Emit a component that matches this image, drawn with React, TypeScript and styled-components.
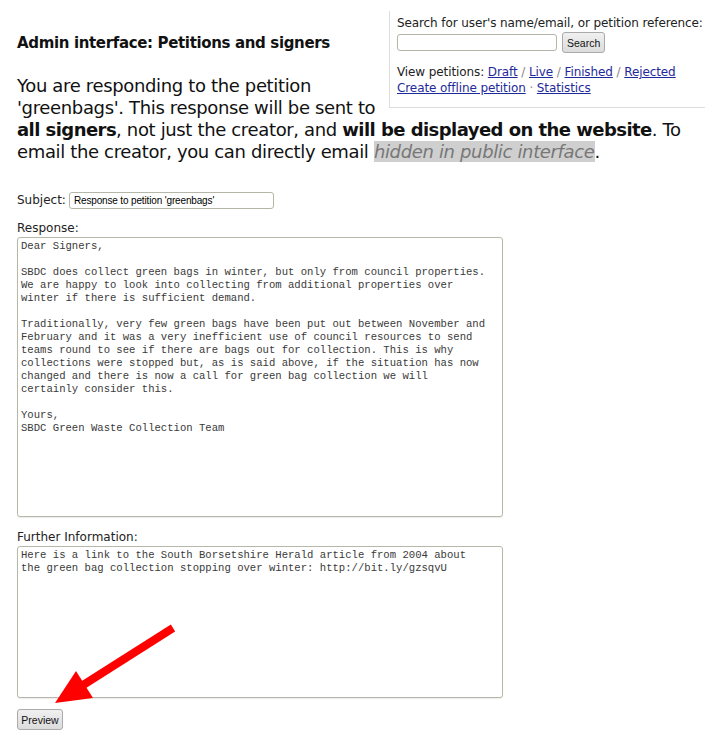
import React from "react";
import styled, { createGlobalStyle } from "styled-components";

const Global = createGlobalStyle`
  html, body { margin: 0; padding: 0; background: #fff; overflow-x: hidden; }
  body { font-family: "DejaVu Sans", Verdana, sans-serif; color: #111; }
`;

const Page = styled.div`
  position: relative;
  padding: 0 0 0 17px;
  width: 688px;
  min-height: 742px;
`;

const SearchBox = styled.div`
  float: right;
  width: 308px;
  margin-top: 11px;
  margin-left: 8px;
  padding: 4px 0 11px 7px;
  border-left: 1px solid #ddd;
  border-bottom: 1px solid #ddd;
  font-size: 12px;
  line-height: 16px;
  letter-spacing: -0.1px;
  white-space: nowrap;
  overflow: hidden;
  color: #222;
`;

const SearchRow = styled.div`
  display: flex;
  align-items: center;
  gap: 5px;
  margin: 1px 0 11px;
`;

const TextInput = styled.input<{ $w: number }>`
  width: ${(p) => p.$w}px;
  height: 17px;
  box-sizing: border-box;
  border: 1px solid #b5b5a8;
  border-radius: 3px;
  padding: 0 4px;
  font-family: "Liberation Sans", Arial, sans-serif;
  font-size: 10px;
  letter-spacing: -0.15px;
  color: #000;
  background: #fff;
`;

const Button = styled.button`
  height: 21px;
  padding: 0 4px;
  border: 1px solid #aaa;
  border-radius: 3px;
  background: linear-gradient(#f0f0f0, #dcdcdc);
  font-family: "Liberation Sans", Arial, sans-serif;
  font-size: 10.5px;
  color: #111;
`;

const Link = styled.a`
  color: #1f2a9a;
  text-decoration: underline;
`;

const Sep = styled.span`
  color: #888;
`;

const Heading = styled.h2`
  margin: 0;
  padding-top: 34px;
  font-size: 15px;
  line-height: 18px;
  font-weight: bold;
  letter-spacing: -0.35px;
  color: #111;
`;

const Intro = styled.p`
  margin: 23px 0 0;
  font-size: 18px;
  line-height: 22px;
  color: #111;
  letter-spacing: -0.35px;
`;

const Strong = styled.b`
  letter-spacing: -0.55px;
`;

const Hidden = styled.span`
  background: #cfcfcf;
  color: #777;
  font-style: italic;
`;

const Form = styled.form`
  clear: both;
  padding-top: 29px;
  font-size: 12px;
  line-height: 15px;
  color: #222;
`;

const FieldRow = styled.div`
  display: flex;
  align-items: center;
  gap: 3px;
  height: 16px;
`;

const Label = styled.label<{ $top: number }>`
  display: block;
  margin-top: ${(p) => p.$top}px;
  margin-bottom: 1px;
`;

const Area = styled.textarea<{ $h: number }>`
  display: block;
  width: 486px;
  height: ${(p) => p.$h}px;
  box-sizing: border-box;
  margin: 0;
  padding: 2px 3px;
  border: 1px solid #b8b8aa;
  border-radius: 3px;
  box-shadow: 0 1px 1px rgba(0, 0, 0, 0.08);
  font-family: "Liberation Mono", "Courier New", monospace;
  font-size: 10.6px;
  line-height: 13px;
  color: #3a3a3a;
  resize: none;
  overflow: hidden;
`;

const PreviewButton = styled(Button)`
  display: block;
  margin-top: 11px;
  width: 46px;
  padding: 0;
`;

const ArrowSvg = styled.svg`
  position: absolute;
  left: 0;
  top: 0;
  pointer-events: none;
`;

const responseText = `Dear Signers,

SBDC does collect green bags in winter, but only from council properties.
We are happy to look into collecting from additional properties over
winter if there is sufficient demand.

Traditionally, very few green bags have been put out between November and
February and it was a very inefficient use of council resources to send
teams round to see if there are bags out for collection. This is why
collections were stopped but, as is said above, if the situation has now
changed and there is now a call for green bag collection we will
certainly consider this.

Yours,
SBDC Green Waste Collection Team`;

const furtherText = `Here is a link to the South Borsetshire Herald article from 2004 about
the green bag collection stopping over winter: http://bit.ly/gzsqvU`;

export default function App() {
  return (
    <>
      <Global />
      <Page>
        <SearchBox>
          <div>Search for user's name/email, or petition reference:</div>
          <SearchRow>
            <TextInput $w={160} />
            <Button type="button">Search</Button>
          </SearchRow>
          <div>
            View petitions: <Link href="#">Draft</Link> <Sep>/</Sep>{" "}
            <Link href="#">Live</Link> <Sep>/</Sep>{" "}
            <Link href="#">Finished</Link> <Sep>/</Sep>{" "}
            <Link href="#">Rejected</Link>
          </div>
          <div>
            <Link href="#">Create offline petition</Link> <Sep>·</Sep>{" "}
            <Link href="#">Statistics</Link>
          </div>
        </SearchBox>
        <Heading>Admin interface: Petitions and signers</Heading>
        <Intro>
          You are responding to the petition 'greenbags'. This response will
          be sent to <Strong>all signers</Strong>, not just the creator, and{" "}
          <Strong>will be displayed on the website</Strong>. To email the
          creator, you can directly email{" "}
          <Hidden>hidden in public interface</Hidden>.
        </Intro>
        <Form>
          <FieldRow>
            <span>Subject:</span>
            <TextInput $w={205} defaultValue="Response to petition 'greenbags'" />
          </FieldRow>
          <Label $top={13}>Response:</Label>
          <Area $h={280} defaultValue={responseText} />
          <Label $top={13}>Further Information:</Label>
          <Area $h={152} defaultValue={furtherText} />
          <PreviewButton type="button">Preview</PreviewButton>
        </Form>
        <ArrowSvg width="705" height="742" viewBox="0 0 705 742">
          <line x1="173" y1="628" x2="80" y2="687" stroke="#f00" strokeWidth="8" />
          <polygon points="55,703 76,671 93,698" fill="#f00" />
        </ArrowSvg>
      </Page>
    </>
  );
}
